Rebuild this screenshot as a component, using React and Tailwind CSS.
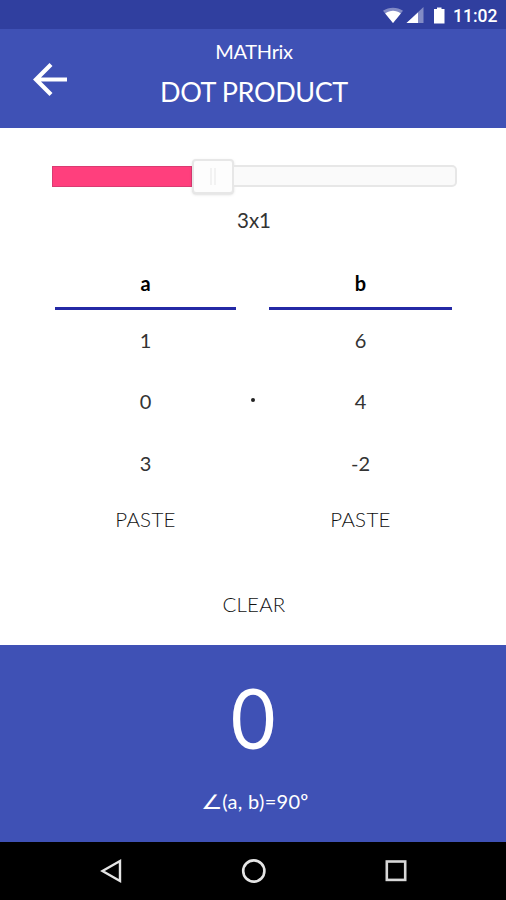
const vectors = [
  { name: 'a', values: ['1', '0', '3'], box: 'w-[181px]' },
  { name: 'b', values: ['6', '4', '-2'], box: 'w-[183px]' },
];

function StatusBar() {
  return (
    <div className="flex h-[29px] items-center justify-end bg-[#303f9f] pr-[9px] text-white">
      <svg width="72" height="20" viewBox="0 0 72 20" className="mt-[3px]">
        <path d="M2 4.8C8 0.8 16 0.8 22 4.8L12 17Z" fill="#fff" opacity="0.4" />
        <path d="M4.2 7.4C9 4 15 4 19.8 7.4L12 17Z" fill="#fff" />
        <path d="M42.5 1V17H25.5Z" fill="#fff" opacity="0.4" />
        <path d="M37 6.4V17H25.5Z" fill="#fff" />
        <path d="M53 3H56V1.5H60.5V3H63.5V17.5H53Z" fill="#fff" />
      </svg>
      <span className="mt-[3px] w-[44px] font-['Roboto',sans-serif] text-[17.5px] leading-5 font-medium">11:02</span>
    </div>
  );
}

function Header() {
  return (
    <header className="flex h-[99px] bg-[#3f51b5] text-white">
      <button className="ml-[32px] mt-[32px] h-9 w-9">
        <svg width="36" height="36" viewBox="0 0 36 36" fill="none" stroke="#fff" strokeWidth="4.2">
          <path d="M35 18.5H4M19 3.5L4 18.5L19 33.5" />
        </svg>
      </button>
      <div className="flex w-[372px] flex-col items-center">
        <p className="mt-[10px] text-[20px] leading-6 tracking-[-0.3px]">MATHrix</p>
        <h1 className="mt-[13px] text-[27px] leading-8 tracking-[-0.4px]">DOT PRODUCT</h1>
      </div>
    </header>
  );
}

function SizeSlider() {
  return (
    <div className="ml-[52px] mt-[30px] flex h-[36px] w-[405px] items-center">
      <div className="h-[21px] w-[140px] border border-[#d93b72] bg-[#ff3f7d]" />
      <div className="flex h-[35px] w-[42px] items-center justify-center gap-[2px] rounded-[4px] border-2 border-[#e7e7e7] bg-[#fdfdfd] shadow-sm">
        <i className="h-[17px] w-[2px] bg-[#f2f2f2]" />
        <i className="h-[17px] w-[2px] bg-[#f2f2f2]" />
      </div>
      <div className="h-[22px] flex-1 rounded-r-[5px] border-2 border-l-0 border-[#e7e7e7] bg-[#fafafa]" />
    </div>
  );
}

function Vector({ vector }) {
  return (
    <div className={`flex flex-col items-center ${vector.box}`}>
      <div className="flex h-[43px] w-full justify-center border-b-[3px] border-[#2429a5]">
        <strong className="text-[20px] leading-8">{vector.name}</strong>
      </div>
      {vector.values.map((value) => (
        <span key={value} className="h-[61.5px] pt-[13.5px] text-[20px] leading-8 text-[#333]">{value}</span>
      ))}
      <button className="mt-[8px] text-[20.5px] leading-8 font-light tracking-[0.3px] text-[#111]">PASTE</button>
    </div>
  );
}

export default function App() {
  return (
    <div className="flex h-[900px] w-[506px] flex-col overflow-hidden bg-white font-['Lato',sans-serif]">
      <StatusBar />
      <Header />
      <main className="flex h-[517px] flex-col">
        <SizeSlider />
        <p className="mt-[10px] pl-[2px] text-center text-[20.5px] leading-8 text-[#333]">3x1</p>
        <div className="mt-[31px] flex h-[270px] pl-[55px]">
          <Vector vector={vectors[0]} />
          <div className="flex w-[33px] justify-center pt-[131px]">
            <i className="h-[4px] w-[4px] rounded-full bg-[#222]" />
          </div>
          <Vector vector={vectors[1]} />
        </div>
        <button className="mx-auto mt-[51px] pl-[2px] text-[20.5px] leading-8 font-light tracking-[0.2px] text-[#111]">CLEAR</button>
      </main>
      <section className="flex h-[197px] flex-col items-center bg-[#3f51b5] text-white">
        <p className="mt-[22px] scale-x-[0.93] pl-[1px] text-[83px] leading-[100px]">0</p>
        <p className="mt-[18px] flex items-baseline pl-[4px] leading-8">
          <span className="inline-block origin-left scale-x-[1.2] pr-[3px] text-[20px] leading-8">∠</span>
          <span className="text-[20px] tracking-[0.3px]">(a, b)=90º</span>
        </p>
      </section>
      <nav className="flex h-[58px] items-center justify-between bg-black pl-[99px] pr-[98px]">
        <svg width="24" height="26" viewBox="0 0 24 26" fill="none" stroke="#e5e5e5" strokeWidth="2.4">
          <path d="M21 3V23L3.5 13Z" />
        </svg>
        <svg width="26" height="26" viewBox="0 0 26 26" fill="none" stroke="#e5e5e5" strokeWidth="2.6">
          <circle cx="12.8" cy="13" r="10.6" />
        </svg>
        <svg width="24" height="24" viewBox="0 0 24 24" fill="none" stroke="#d8d8d8" strokeWidth="2.6">
          <rect x="2.8" y="2.5" width="18.4" height="18.4" />
        </svg>
      </nav>
    </div>
  );
}
